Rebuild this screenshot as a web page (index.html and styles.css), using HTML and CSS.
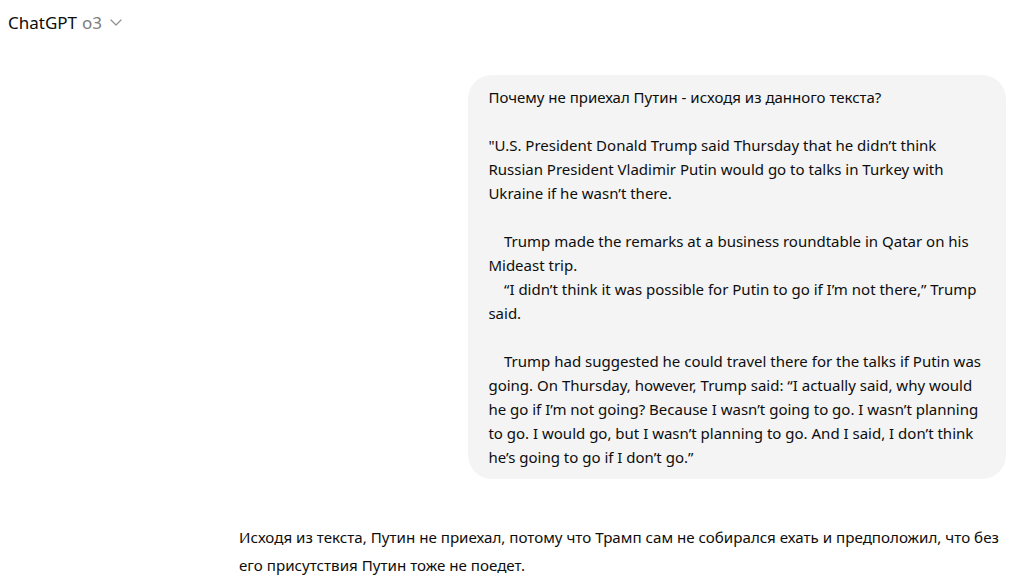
FILE: index.html
```html
<!DOCTYPE html>
<html lang="ru">
<head>
<meta charset="utf-8">
<title>ChatGPT o3</title>
<link rel="stylesheet" href="styles.css">
</head>
<body>
<header class="topbar">
  <button class="model-switch">
    <span class="brand">ChatGPT</span>
    <span class="model">o3</span>
    <svg class="chev" width="16" height="16" viewBox="0 0 16 16" fill="none" stroke="currentColor" stroke-width="1.2" stroke-linecap="round" stroke-linejoin="round"><path d="M3 6l5 5 5-5"/></svg>
  </button>
</header>
<main class="thread">
  <div class="column">
    <div class="user-row">
      <div class="bubble">Почему не приехал Путин - исходя из данного текста?

"U.S. President Donald Trump said Thursday that he didn’t think
Russian President Vladimir Putin would go to talks in Turkey with
Ukraine if he wasn’t there.

    Trump made the remarks at a business roundtable in Qatar on his
Mideast trip.
    “I didn’t think it was possible for Putin to go if I’m not there,” Trump
said.

    Trump had suggested he could travel there for the talks if Putin was
going. On Thursday, however, Trump said: “I actually said, why would
he go if I’m not going? Because I wasn’t going to go. I wasn’t planning
to go. I would go, but I wasn’t planning to go. And I said, I don’t think
he’s going to go if I don’t go.”</div>
    </div>
    <div class="answer">
      <p>Исходя из текста, Путин не приехал, потому что Трамп сам не собирался ехать и предположил, что без его присутствия Путин тоже не поедет.</p>
    </div>
  </div>
</main>
</body>
</html>
```

FILE: styles.css
```css
html, body {
  margin: 0;
  padding: 0;
  background: #ffffff;
  color: #0d0d0d;
  font-family: "Noto Sans", "Open Sans", sans-serif;
}

.topbar {
  height: 44px;
  display: flex;
  align-items: center;
  padding-left: 8px;
}

.model-switch {
  display: flex;
  align-items: center;
  gap: 5px;
  border: 0;
  background: none;
  padding: 0;
  font-family: inherit;
  font-size: 17px;
  color: #0d0d0d;
}

.model {
  color: #7d7d7d;
}

.chev {
  color: #8f8f8f;
  margin-left: 1px;
}

.thread {
  display: flex;
  justify-content: flex-end;
  padding-right: 15px;
  padding-top: 31px;
}

.column {
  width: 768px;
}

.user-row {
  display: flex;
  justify-content: flex-end;
}

.bubble {
  width: 70%;
  box-sizing: border-box;
  background: #f4f4f4;
  border-radius: 24px;
  padding: 10px 20px;
  font-size: 15px;
  line-height: 24px;
  white-space: pre;
}

.answer {
  margin-top: 44px;
  padding-left: 1px;
  font-size: 15.15px;
  line-height: 28px;
}

.answer p {
  margin: 0;
}
```
